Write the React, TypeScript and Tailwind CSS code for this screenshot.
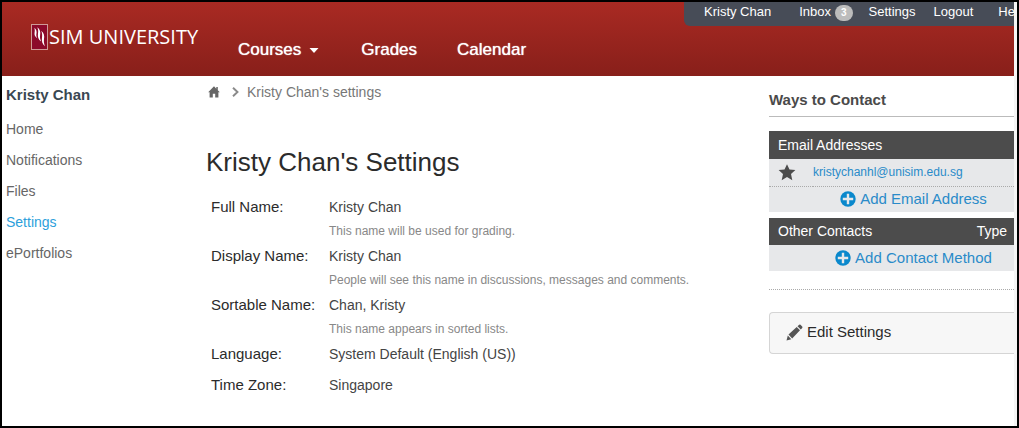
import type { ReactNode } from "react";

const courseLinks = ["Grades", "Calendar"];
const sideLinks = ["Home", "Notifications", "Files", "Settings", "ePortfolios"];

const profile = [
  { label: "Full Name:", value: "Kristy Chan", hint: "This name will be used for grading." },
  {
    label: "Display Name:",
    value: "Kristy Chan",
    hint: "People will see this name in discussions, messages and comments.",
  },
  { label: "Sortable Name:", value: "Chan, Kristy", hint: "This name appears in sorted lists." },
  { label: "Language:", value: "System Default (English (US))" },
  { label: "Time Zone:", value: "Singapore" },
];

function Logo() {
  return (
    <a href="#home" className="flex items-center gap-px text-white">
      <svg width="17" height="26" viewBox="0 0 17 26" aria-hidden="true">
        <rect x="0.5" y="0.5" width="16" height="25" fill="#8c0a2b" stroke="#cf9a97" />
        <g fill="#fff">
          <path d="M3.200 3.800C5.400 5.200 6 7.500 5.400 10C5.100 11.500 5.500 13 6.200 14.200C4 13 3.200 11 3.600 8.600C3.900 6.800 3.900 5.200 3.200 3.800Z" />
          <path d="M6.200 3.200C9 5 9.700 8 9.100 11C8.700 13.500 9.200 15.800 10.200 17.500C7.300 15.800 6.500 12.800 7 9.500C7.400 7 7.200 5 6.200 3.200Z" />
          <path d="M10.200 6.800C13 8.800 13.600 12 13 15C12.600 17.500 13 20.200 14 22.300C11.200 20.300 10.500 17 11 13.500C11.300 11 11.200 8.800 10.200 6.800Z" />
        </g>
      </svg>
      <span className="font-['Open_Sans',sans-serif] text-[20px] leading-6">SIM UNIVERSITY</span>
    </a>
  );
}

function PlusIcon() {
  return (
    <svg width="16" height="16" viewBox="0 0 16 16" className="shrink-0" aria-hidden="true">
      <circle cx="8" cy="8" r="7.700" fill="#0a88cc" />
      <path d="M8 2.800v10.400M2.800 8h10.400" stroke="#e7e8ea" strokeWidth="2.400" />
    </svg>
  );
}

function AddButton({ children }: { children: ReactNode }) {
  return (
    <button type="button" className="flex w-full items-center justify-center gap-1 text-[15px] leading-6 text-[#2a8bc9]">
      <PlusIcon />
      {children}
    </button>
  );
}

function TopBar() {
  return (
    <nav
      aria-label="Account"
      className="flex h-6 w-[330px] items-start rounded-bl-md bg-[#474c57] pl-5 text-[13px] leading-5 whitespace-nowrap text-white"
    >
      <a href="#profile" className="mr-7">Kristy Chan</a>
      <a href="#inbox" className="mr-4 flex items-start gap-1">
        Inbox
        <span className="mt-[3px] h-4 rounded-full bg-[#bcbcbc] px-1.5 text-[10px] leading-4 font-bold">3</span>
      </a>
      <a href="#settings" className="mr-[18px]">Settings</a>
      <a href="#logout" className="mr-[25px]">Logout</a>
      <a href="#help">He</a>
    </nav>
  );
}

export default function App() {
  return (
    <div className="flex min-h-screen flex-col overflow-x-hidden border-2 border-black bg-white font-['Liberation_Sans',Arial,sans-serif] text-[#444]">
      <div className="flex grow flex-col border-r-3 border-[#f5f5f5]">
        <header className="flex h-[74px] items-start justify-between bg-linear-to-b from-[#a92a23] to-[#881f1a]">
          <div className="flex pl-[29px]">
            <div className="w-[207px] pt-[22px]">
              <Logo />
            </div>
            <nav
              aria-label="Main"
              className="flex items-center gap-10 pt-9 text-[17px] leading-6 text-white [text-shadow:0_0_1px_#fff]"
            >
              <button type="button" className="mr-0.5 flex items-center gap-2 [text-shadow:inherit]">
                Courses
                <svg width="10" height="5" viewBox="0 0 10 5" aria-hidden="true">
                  <path d="M0.500 0h9L5 5z" fill="#fff" />
                </svg>
              </button>
              {courseLinks.map((name) => (
                <a key={name} href={"#" + name.toLowerCase()}>
                  {name}
                </a>
              ))}
            </nav>
          </div>
          <TopBar />
        </header>

        <div className="flex grow">
          <aside className="w-[204px] shrink-0 pt-[9px] pl-1">
            <h2 className="text-[15px] leading-5 font-bold text-[#3a4752]">Kristy Chan</h2>
            <ul className="mt-[9px] text-[14px] text-[#666]">
              {sideLinks.map((name) => (
                <li key={name}>
                  <a
                    href={"#" + name.toLowerCase()}
                    className={name === "Settings" ? "block h-[31px] leading-[31px] text-[#2d9fdb]" : "block h-[31px] leading-[31px]"}
                  >
                    {name}
                  </a>
                </li>
              ))}
            </ul>
          </aside>

          <main className="min-w-0 grow">
            <nav aria-label="Breadcrumb" className="flex h-7 items-center pt-1 pl-0.5 text-[14px] text-[#777]">
              <a href="#home" aria-label="Home">
                <svg width="12" height="12" viewBox="0 0 12 12" fill="#666" aria-hidden="true">
                  <path d="M6 0.300L0.200 6.300H1.600V11.500H4.800V7.800H7.200V11.500H10.400V6.300H11.800L9.800 4.200V1H8.300V2.700Z" />
                </svg>
              </a>
              <svg width="7" height="10" viewBox="0 0 7 10" className="mr-2 ml-3" aria-hidden="true">
                <path d="M1 0.700L5.500 5L1 9.300" fill="none" stroke="#8a8a8a" strokeWidth="1.900" />
              </svg>
              <span>Kristy Chan's settings</span>
            </nav>
            <h1 className="mt-10 text-[26px] leading-9 text-[#2b2b2b]">Kristy Chan's Settings</h1>
            <dl className="mt-3 pl-[5px]">
              {profile.map((row) => (
                <div key={row.label} className="flex">
                  <dt className="w-[118px] shrink-0 text-[15px] leading-[30px] text-[#2b2b2b]">{row.label}</dt>
                  <dd className="text-[14px] leading-[31px]">
                    {row.value}
                    {row.hint && <p className="h-[18px] text-[12px] leading-4 text-[#888]">{row.hint}</p>}
                  </dd>
                </div>
              ))}
            </dl>
          </main>

          <aside className="w-[245px] shrink-0 pt-2.5">
            <h2 className="border-b border-[#bbb] pb-0.5 text-[15px] leading-7 font-bold text-[#4a4a4a]">Ways to Contact</h2>
            <table className="mt-[14px] w-full bg-[#e7e8ea]">
              <thead>
                <tr className="bg-[#4c4c4c] text-left text-[14px] text-white">
                  <th colSpan={2} className="h-7 pl-[9px] font-normal">Email Addresses</th>
                </tr>
              </thead>
              <tbody>
                <tr className="h-[27px] border-b border-dotted border-[#aaa]">
                  <td className="w-11 pl-[9px]">
                    <svg width="18" height="17" viewBox="0 0 18 17" fill="#4c4c4c" aria-label="Default email">
                      <path d="M9 0.300L11.500 5.400L17.400 6L13 10L14.300 16.200L9 13.100L3.700 16.200L5 10L0.600 6L6.500 5.400Z" />
                    </svg>
                  </td>
                  <td className="text-[12px]">
                    <a href="mailto:kristychanhl@unisim.edu.sg" className="text-[#2a8bc9]">kristychanhl@unisim.edu.sg</a>
                  </td>
                </tr>
                <tr>
                  <td colSpan={2} className="h-[26px] pl-11">
                    <AddButton>Add Email Address</AddButton>
                  </td>
                </tr>
              </tbody>
            </table>
            <table className="mt-1.5 w-full bg-[#e7e8ea]">
              <thead>
                <tr className="bg-[#4c4c4c] text-left text-[14px] text-white">
                  <th className="h-[27px] pl-[9px] font-normal">Other Contacts</th>
                  <th className="pr-[7px] text-right font-normal">Type</th>
                </tr>
              </thead>
              <tbody>
                <tr>
                  <td colSpan={2} className="h-[26px] pl-11">
                    <AddButton>Add Contact Method</AddButton>
                  </td>
                </tr>
              </tbody>
            </table>
            <hr className="mt-[18px] border-t border-dotted border-[#aaa]" />
            <button
              type="button"
              className="mt-[22px] flex h-[42px] w-full items-center gap-1 rounded-l-sm border border-r-0 border-[#d5d5d5] bg-[#f7f7f7] pb-0.5 pl-4 text-[15px] text-[#2b2b2b]"
            >
              <svg width="17" height="17" viewBox="0 0 17 17" fill="#555" aria-hidden="true">
                <path d="M0.500 16.500L1.800 11.500L5.300 15.200ZM2.500 10.600L10.700 3L14 6.300L6.200 14.400ZM11.500 2.200L13.200 0.700Q13.900 0.200 14.500 0.800L16.200 2.500Q16.800 3.200 16.200 3.900L14.800 5.500Z" />
              </svg>
              Edit Settings
            </button>
          </aside>
        </div>
      </div>
    </div>
  );
}
